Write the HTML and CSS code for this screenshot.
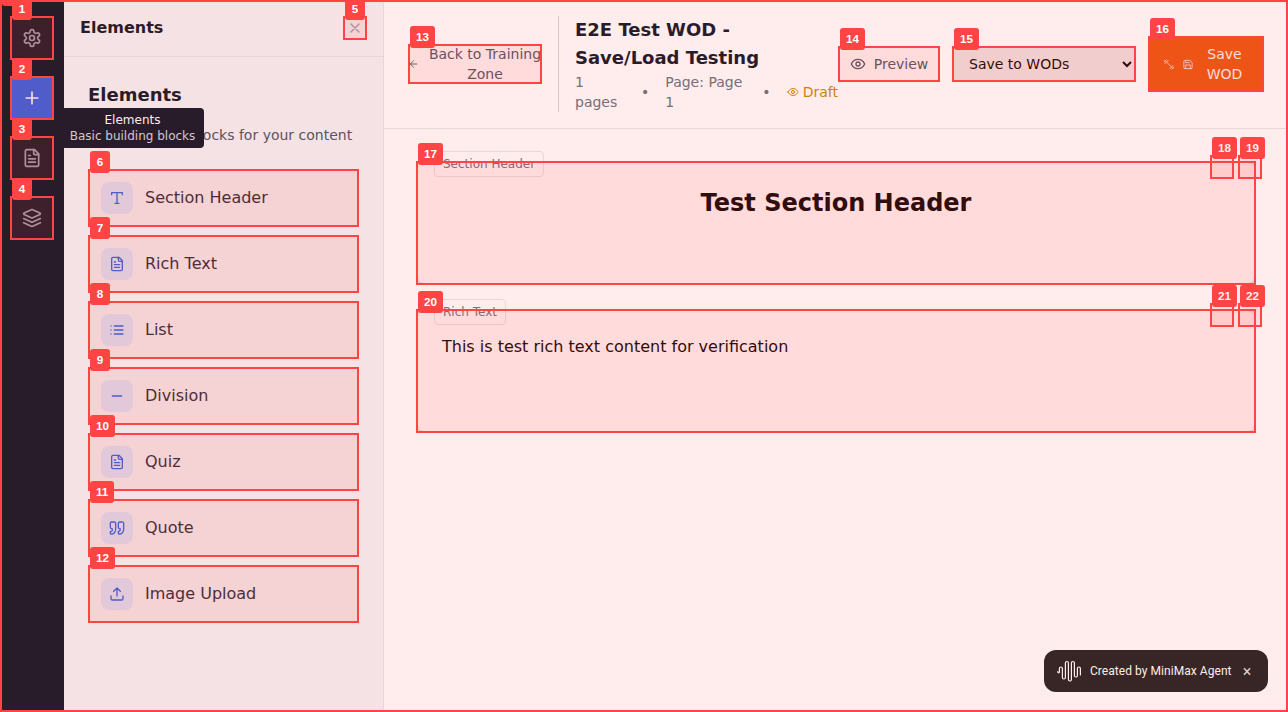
FILE: index.html
```html
<!DOCTYPE html>
<html lang="en">
<head>
<meta charset="utf-8">
<title>WOD Editor</title>
<link rel="stylesheet" href="styles.css">
</head>
<body>
<svg class="defs" width="0" height="0">
  <symbol id="gear" viewBox="0 0 24 24"><path d="M12.22 2h-.44a2 2 0 0 0-2 2v.18a2 2 0 0 1-1 1.73l-.43.25a2 2 0 0 1-2 0l-.15-.08a2 2 0 0 0-2.73.73l-.22.38a2 2 0 0 0 .73 2.73l.15.1a2 2 0 0 1 1 1.72v.51a2 2 0 0 1-1 1.74l-.15.09a2 2 0 0 0-.73 2.73l.22.38a2 2 0 0 0 2.73.73l.15-.08a2 2 0 0 1 2 0l.43.25a2 2 0 0 1 1 1.73V20a2 2 0 0 0 2 2h.44a2 2 0 0 0 2-2v-.18a2 2 0 0 1 1-1.73l.43-.25a2 2 0 0 1 2 0l.15.08a2 2 0 0 0 2.73-.73l.22-.39a2 2 0 0 0-.73-2.73l-.15-.08a2 2 0 0 1-1-1.74v-.5a2 2 0 0 1 1-1.74l.15-.09a2 2 0 0 0 .73-2.73l-.22-.38a2 2 0 0 0-2.73-.73l-.15.08a2 2 0 0 1-2 0l-.43-.25a2 2 0 0 1-1-1.73V4a2 2 0 0 0-2-2z"/><circle cx="12" cy="12" r="3"/></symbol>
  <symbol id="plus" viewBox="0 0 24 24"><path d="M5 12h14M12 5v14"/></symbol>
  <symbol id="file" viewBox="0 0 24 24"><path d="M15 2H6a2 2 0 0 0-2 2v16a2 2 0 0 0 2 2h12a2 2 0 0 0 2-2V7Z"/><path d="M14 2v4a2 2 0 0 0 2 2h4M10 9H8M16 13H8M16 17H8"/></symbol>
  <symbol id="layers" viewBox="0 0 24 24"><path d="m12.83 2.18a2 2 0 0 0-1.66 0L2.6 6.08a1 1 0 0 0 0 1.83l8.58 3.91a2 2 0 0 0 1.66 0l8.58-3.9a1 1 0 0 0 0-1.83Z"/><path d="m22 17.65-9.17 4.16a2 2 0 0 1-1.66 0L2 17.65"/><path d="m22 12.65-9.17 4.16a2 2 0 0 1-1.66 0L2 12.65"/></symbol>
  <symbol id="close" viewBox="0 0 24 24"><path d="M18 6 6 18M6 6l12 12"/></symbol>
  <symbol id="type" viewBox="0 0 24 24"><path d="M4 7V4h16v3M9 20h6M12 4v16"/></symbol>
  <symbol id="list" viewBox="0 0 24 24"><path d="M8 6h13M8 12h13M8 18h13M3 6h.01M3 12h.01M3 18h.01"/></symbol>
  <symbol id="minus" viewBox="0 0 24 24"><path d="M5 12h14"/></symbol>
  <symbol id="quote" viewBox="0 0 24 24"><path d="M3 21c3 0 7-1 7-8V5c0-1.25-.756-2.017-2-2H4c-1.25 0-2 .75-2 1.972V11c0 1.25.75 2 2 2 1 0 1 0 1 1v1c0 1-1 2-2 2s-1 .008-1 1.031V20c0 1 0 1 1 1z"/><path d="M15 21c3 0 7-1 7-8V5c0-1.25-.757-2.017-2-2h-4c-1.25 0-2 .75-2 1.972V11c0 1.25.75 2 2 2h.75c0 2.25.25 4-2.75 4v3c0 1 0 1 1 1z"/></symbol>
  <symbol id="upload" viewBox="0 0 24 24"><path d="M21 15v4a2 2 0 0 1-2 2H5a2 2 0 0 1-2-2v-4M17 8l-5-5-5 5M12 3v12"/></symbol>
  <symbol id="back" viewBox="0 0 24 24"><path d="m12 19-7-7 7-7M19 12H5"/></symbol>
  <symbol id="eye" viewBox="0 0 24 24"><path d="M2 12s3-7 10-7 10 7 10 7-3 7-10 7-10-7-10-7Z"/><circle cx="12" cy="12" r="3"/></symbol>
  <symbol id="dumbbell" viewBox="0 0 24 24"><path d="m6.5 6.5 11 11M21 21l-1-1M3 3l1 1M18 22l4-4M2 6l4-4M3 10l7-7M14 21l7-7"/></symbol>
  <symbol id="save" viewBox="0 0 24 24"><path d="M19 21H5a2 2 0 0 1-2-2V5a2 2 0 0 1 2-2h11l5 5v11a2 2 0 0 1-2 2z"/><path d="M17 21v-8H7v8M7 3v5h8"/></symbol>
  <symbol id="wave" viewBox="0 0 25 22"><path d="M.8 11.5v.5a.8.8 0 0 0 1.6 0V8.5a1.5 1.5 0 0 1 3 0v9a1.5 1.5 0 0 0 3 0V3a1.5 1.5 0 0 1 3 0v16.500a1.500 1.500 0 0 0 3 0V3a1.500 1.500 0 0 1 3 0v12.500a1.500 1.500 0 0 0 3 0v-7a1.500 1.500 0 0 1 3 0V15"/></symbol>
</svg>
<div class="app">
  <nav class="rail">
    <button class="rail-btn mark"><svg><use href="#gear"/></svg><b class="tag">1</b></button>
    <button class="rail-btn active mark"><svg><use href="#plus"/></svg><b class="tag">2</b>
      <span class="tooltip">Elements<small>Basic building blocks</small></span></button>
    <button class="rail-btn mark"><svg><use href="#file"/></svg><b class="tag">3</b></button>
    <button class="rail-btn mark"><svg><use href="#layers"/></svg><b class="tag">4</b></button>
  </nav>
  <aside class="panel">
    <header class="panel-head"><h2>Elements</h2><button class="close mark"><svg><use href="#close"/></svg><b class="tag">5</b></button></header>
    <div class="panel-body">
      <h3>Elements</h3>
      <p>Basic building blocks for your content</p>
      <div class="items">
        <button class="item mark"><span class="chip"><svg><use href="#type"/></svg></span>Section Header<b class="tag">6</b></button>
        <button class="item mark"><span class="chip"><svg><use href="#file"/></svg></span>Rich Text<b class="tag">7</b></button>
        <button class="item mark"><span class="chip"><svg><use href="#list"/></svg></span>List<b class="tag">8</b></button>
        <button class="item mark"><span class="chip"><svg><use href="#minus"/></svg></span>Division<b class="tag">9</b></button>
        <button class="item mark"><span class="chip"><svg><use href="#file"/></svg></span>Quiz<b class="tag">10</b></button>
        <button class="item mark"><span class="chip"><svg><use href="#quote"/></svg></span>Quote<b class="tag">11</b></button>
        <button class="item mark"><span class="chip"><svg><use href="#upload"/></svg></span>Image Upload<b class="tag">12</b></button>
      </div>
    </div>
  </aside>
  <main class="main">
    <header class="topbar">
      <button class="back mark"><svg><use href="#back"/></svg><span>Back to Training Zone</span><b class="tag">13</b></button>
      <div class="divider"></div>
      <div class="doc">
        <h1>E2E Test WOD -<br>Save/Load Testing</h1>
        <div class="meta"><span class="count">1 pages</span><span>•</span><span class="page">Page: Page 1</span><span>•</span><span class="draft"><svg><use href="#eye"/></svg>Draft</span></div>
      </div>
      <div class="actions">
        <button class="preview mark"><svg><use href="#eye"/></svg>Preview<b class="tag">14</b></button>
        <div class="target mark"><select><option>Save to WODs</option></select><b class="tag">15</b></div>
        <button class="save mark"><svg><use href="#dumbbell"/></svg><svg><use href="#save"/></svg><span>Save WOD</span><b class="tag">16</b></button>
      </div>
    </header>
    <div class="canvas">
      <section class="card mark"><span class="label">Section Header</span><h2>Test Section Header</h2><b class="tag">17</b>
        <div class="tools"><button class="tool mark"><b class="tag">18</b></button><button class="tool mark"><b class="tag">19</b></button></div></section>
      <section class="card mark"><span class="label">Rich Text</span><p>This is test rich text content for verification</p><b class="tag">20</b>
        <div class="tools"><button class="tool mark"><b class="tag">21</b></button><button class="tool mark"><b class="tag">22</b></button></div></section>
    </div>
  </main>
  <div class="credit"><svg><use href="#wave"/></svg><span>Created by MiniMax Agent</span><i>×</i></div>
  <div class="frame"><b class="tag">0</b></div>
</div>
</body>
</html>
```
FILE: styles.css
```css
* { box-sizing: border-box; }
body { margin: 0; font-family: "DejaVu Sans", sans-serif; font-size: 16px; line-height: 24px; color: #111827; }
h1, h2, h3, p { margin: 0; }
button { border: 0; padding: 0; background: none; font: inherit; color: inherit; }
svg { fill: none; stroke: currentColor; stroke-width: 2; stroke-linecap: round; stroke-linejoin: round; width: 16px; height: 16px; flex: none; }
.defs { position: absolute; }
.app { position: relative; display: flex; width: 1288px; height: 712px; overflow: hidden; background: #fff; }

/* numbered outlines */
.mark { position: relative; }
.mark::after, .frame { content: ""; position: absolute; inset: 0; border: 2px solid #f44; background: rgba(255, 68, 68, .1); pointer-events: none; }
.frame { z-index: 20; }
.tag { position: absolute; z-index: 30; left: 2px; top: -18px; min-width: 20px; height: 22px; padding: 0 6px; border-radius: 3px; background: #f44; color: #fff; font: bold 11.7px/22px "Liberation Sans", sans-serif; text-align: center; white-space: nowrap; }
.frame .tag { left: 0; }

.rail { width: 64px; padding: 16px 10px; display: flex; flex-direction: column; gap: 16px; background: #111827; }
.rail-btn { width: 44px; height: 44px; display: flex; align-items: center; justify-content: center; color: #9ca3af; }
.rail-btn svg { width: 20px; height: 20px; }
.rail-btn.active { background: #2563eb; color: #fff; }
.tooltip { position: absolute; z-index: 10; left: 51px; top: 32px; width: 143px; height: 40px; padding: 4px 0; border-radius: 4px; background: #111827; color: #fff; font-size: 12px; line-height: 16px; text-align: center; }
.tooltip small { display: block; font-size: 12px; color: #d1d5db; }

.panel { width: 320px; background: #f3f4f6; border-right: 1px solid #e5e7eb; }
.panel-head { height: 57px; padding: 0 16px; display: flex; align-items: center; justify-content: space-between; border-bottom: 1px solid #e5e7eb; }
.panel-head h2 { font-size: 16px; }
.close { width: 24px; height: 24px; display: flex; align-items: center; justify-content: center; color: #9ca3af; }
.panel-body { padding: 24px; }
.panel-body h3 { font-size: 18px; line-height: 28px; }
.panel-body p { margin: 16px 0 24px; font-size: 14px; line-height: 20px; color: #4b5563; white-space: nowrap; }
.items { display: flex; flex-direction: column; gap: 8px; }
.item { height: 58px; padding: 13px; display: flex; align-items: center; gap: 12px; color: #1f2937; }
.chip { width: 32px; height: 32px; border-radius: 8px; background: #dbeafe; color: #2563eb; display: flex; align-items: center; justify-content: center; }

.main { flex: 1; min-width: 0; }
.topbar { height: 129px; padding: 16px 24px; display: flex; align-items: center; border-bottom: 1px solid #e5e7eb; font-size: 14px; line-height: 20px; }
.back { width: 134px; height: 40px; display: flex; align-items: center; justify-content: space-between; color: #4b5563; }
.back svg { width: 11px; height: 12px; }
.back span { width: 114px; white-space: normal; }
.divider { width: 1px; height: 96px; margin: 0 16px; background: #d1d5db; }
.doc { width: 263px; }
.doc h1 { font-size: 18px; line-height: 28px; }
.meta { display: flex; align-items: center; justify-content: space-between; color: #6b7280; }
.count { width: 50px; }
.page { width: 81px; }
.draft { display: flex; align-items: center; gap: 4px; color: #ca8a04; }
.draft svg { width: 12px; height: 12px; }
.actions { display: flex; align-items: center; gap: 12px; }
.preview { width: 102px; height: 36px; display: flex; align-items: center; justify-content: center; gap: 8px; color: #4b5563; }
.target { width: 184px; height: 36px; }
.target select { width: 100%; height: 36px; padding: 8px 12px; border: 1px solid #d1d5db; border-radius: 6px; background: #efefef; color: #000; font: 14px "DejaVu Sans", sans-serif; }
.save { width: 116px; height: 56px; padding: 0 18px 0 15px; display: flex; align-items: center; border-radius: 4px; background: #ea580c; color: #fff; }
.save svg { width: 12px; height: 11px; margin-right: 7px; opacity: .85; }
.save span { flex: 1; margin-left: 2px; }

.canvas { padding: 32px; display: flex; flex-direction: column; gap: 24px; }
.card { height: 124px; padding: 24px; border: 2px solid #e5e7eb; border-radius: 8px; }
.card::after { inset: -2px; }
.card > .tag { left: 0; top: -20px; }
.card h2 { font-size: 24px; line-height: 32px; text-align: center; color: #000; }
.card p { color: #000; }
.label { position: absolute; left: 16px; top: -12px; padding: 4px 8px; border: 1px solid #e5e7eb; border-radius: 4px; background: #fff; font-size: 12px; line-height: 16px; color: #6b7280; }
.tools { position: absolute; z-index: 1; right: -8px; top: -8px; display: flex; gap: 4px; }
.tool { width: 24px; height: 24px; }

.credit { position: absolute; right: 20px; bottom: 20px; width: 224px; height: 42px; padding: 0 14px 0 13px; display: flex; align-items: center; border-radius: 12px; background: #222; color: #fff; font: 400 12px Roboto, sans-serif; letter-spacing: .05px; }
.credit svg { width: 25px; height: 22px; stroke-width: 1.2; margin-right: 8px; }
.credit span { flex: 1; white-space: nowrap; }
.credit i { font: 16px Roboto, sans-serif; color: #ddd; width: 14px; text-align: center; }
```
